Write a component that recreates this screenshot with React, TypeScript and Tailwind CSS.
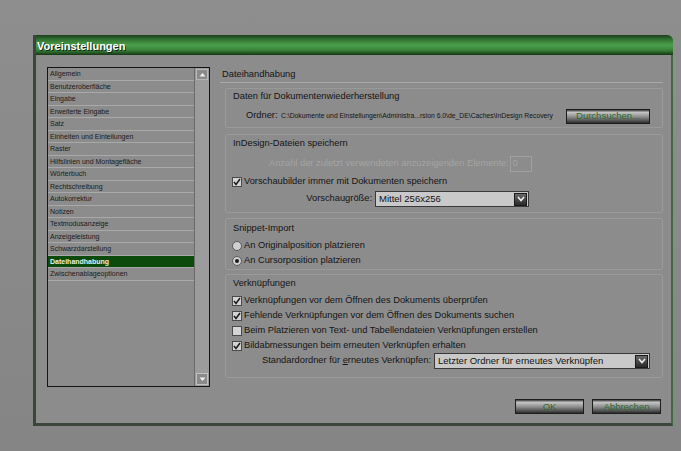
import React from 'react';

const categories = [
  'Allgemein',
  'Benutzeroberfläche',
  'Eingabe',
  'Erweiterte Eingabe',
  'Satz',
  'Einheiten und Einteilungen',
  'Raster',
  'Hilfslinien und Montagefläche',
  'Wörterbuch',
  'Rechtschreibung',
  'Autokorrektur',
  'Notizen',
  'Textmodusanzeige',
  'Anzeigeleistung',
  'Schwarzdarstellung',
  'Dateihandhabung',
  'Zwischenablageoptionen',
];

const font = { fontFamily: '"Liberation Sans", Arial, sans-serif' };

const CheckBox = ({ checked }: { checked: boolean }) => (
  <span className="w-[10px] h-[10px] mr-[2px] bg-[#d4d4d4] border border-[#4a4a4a] flex items-center justify-center shrink-0">
    {checked && (
      <svg width="8" height="8" viewBox="0 0 8 8">
        <path d="M1 4 L3 6.5 L7 1" stroke="#1a1a1a" strokeWidth="1.5" fill="none" />
      </svg>
    )}
  </span>
);

const Radio = ({ checked }: { checked: boolean }) => (
  <span className="w-[10px] h-[10px] mr-[2px] rounded-full bg-[#d0d0d0] border border-[#5a5a5a] flex items-center justify-center shrink-0">
    {checked && <span className="w-[4px] h-[4px] rounded-full bg-[#1a1a1a]" />}
  </span>
);

const SelectBox = ({ value, width }: { value: string; width: string }) => (
  <div className={`${width} h-[16px] bg-[#c9c9c9] border border-[#3a3a3a] flex items-center justify-between pl-[3px] shrink-0`}>
    <span className="text-[9.5px] text-[#111] whitespace-nowrap">{value}</span>
    <span className="w-[13px] h-[13px] mr-[1px] bg-gradient-to-b from-[#6a6a6a] to-[#2a2a2a] border border-[#1a1a1a] flex items-center justify-center">
      <svg width="8" height="6" viewBox="0 0 8 6">
        <path d="M1 1 L4 4.5 L7 1" stroke="#f0f0f0" strokeWidth="1.6" fill="none" />
      </svg>
    </span>
  </div>
);

const MetalButton = ({ label, width }: { label: string; width: string }) => (
  <button
    className={`${width} h-[15px] shrink-0 border border-[#1c1c1c] bg-[linear-gradient(to_bottom,#3a3a3a_0%,#c4c4c4_18%,#8a8a8a_55%,#2e2e2e_100%)] text-[9.5px] text-[#2f6a2f] leading-none flex items-center justify-center`}
  >
    {label}
  </button>
);

export default function App() {
  return (
    <div
      className="w-[681px] h-[451px] bg-[linear-gradient(to_bottom,#8e8e8e,#858585)] pt-[35px] pl-[33px] overflow-hidden"
      style={font}
    >
      <div className="w-[640px] h-[391px] flex flex-col bg-[#8c8c8c] border-l-[3px] border-l-[#3a463a] border-r-[2px] border-r-[#3f6b3f] border-b-[3px] border-b-[#3b453b] rounded-tr-[6px]">
        {/* title bar */}
        <div className="h-[20px] -mr-[2px] rounded-tr-[6px] bg-[linear-gradient(to_bottom,#1b3c1b_0%,#2f6e2f_20%,#4c9f4c_50%,#3b843b_75%,#163616_100%)] flex items-center pl-[1px] pt-[2px]">
          <span className="text-white font-bold text-[11px] [text-shadow:1px_1px_0_#122812]">Voreinstellungen</span>
        </div>

        <div className="flex flex-col pl-[11px] pt-[12px]">
          <div className="flex h-[320px]">
            {/* category list */}
            <div className="w-[163px] h-[320px] border border-[#141414] flex">
              <div className="flex-1 flex flex-col">
                {categories.map((c) => (
                  <div
                    key={c}
                    className={`h-[12.5px] flex items-center pl-[2px] text-[7px] leading-none border-b border-[#a9a9a9] whitespace-nowrap ${
                      c === 'Dateihandhabung' ? 'bg-[#0c4a0c] text-[#e8f4e8] font-bold' : 'text-[#1a1a1a]'
                    }`}
                  >
                    {c}
                  </div>
                ))}
              </div>
              <div className="w-[15px] bg-[#9c9c9c] border-l border-[#6a6a6a] flex flex-col justify-between py-[1px] items-center">
                <div className="w-[12px] h-[11px] bg-[#8a8a8a] border border-[#b8b8b8] flex items-center justify-center">
                  <svg width="7" height="5" viewBox="0 0 7 5">
                    <path d="M0.5 4.5 L3.5 1 L6.5 4.5 Z" fill="#eeeeee" />
                  </svg>
                </div>
                <div className="w-[12px] h-[12px] bg-[#8a8a8a] border border-[#c0c0c0] flex items-center justify-center">
                  <svg width="7" height="5" viewBox="0 0 7 5">
                    <path d="M0.5 0.5 L3.5 4 L6.5 0.5 Z" fill="#eeeeee" />
                  </svg>
                </div>
              </div>
            </div>

            {/* right panel */}
            <div className="w-[443px] ml-[10px] mt-[1px] text-[9.3px] text-[#141414] whitespace-nowrap">
              <div className="h-[15px] flex items-center pl-[2px] border-b border-[#a8a8a8]">Dateihandhabung</div>

              {/* Daten für Dokumentenwiederherstellung */}
              <div className="ml-[5px] mt-[5px] border border-[#999999] rounded-[2px] pt-[1px] pb-[4px]">
                <div className="h-[14px] flex items-center pl-[7px]">Daten für Dokumentenwiederherstellung</div>
                <div className="h-[14px] mt-[5px] flex items-center pl-[20px]">
                  <span className="w-[35px]">Ordner:</span>
                  <span className="text-[6.8px] flex-1 overflow-hidden">
                    C:\Dokumente und Einstellungen\Administra...rsion 6.0\de_DE\Caches\InDesign Recovery
                  </span>
                  <MetalButton label="Durchsuchen..." width="w-[84px]" />
                  <span className="w-[12px]" />
                </div>
              </div>

              {/* InDesign-Dateien speichern */}
              <div className="ml-[5px] mt-[6px] border border-[#999999] rounded-[2px] pt-[2px] pb-[5px]">
                <div className="h-[14px] flex items-center pl-[7px]">InDesign-Dateien speichern</div>
                <div className="h-[16px] mt-[5px] flex items-center pl-[43px] text-[#a5a5a5]">
                  <span>Anzahl der zuletzt verwendeten anzuzeigenden Elemente:</span>
                  <span className="ml-[1px] w-[22px] h-[16px] border border-[#a0a0a0] text-[9px] pl-[2px] flex items-center">0</span>
                </div>
                <div className="h-[14px] mt-[3px] flex items-center pl-[6px]">
                  <CheckBox checked />
                  <span>Vorschaubilder immer mit Dokumenten speichern</span>
                </div>
                <div className="h-[16px] mt-[2px] flex items-center">
                  <span className="w-[149px] text-right pr-[3px]">Vorschaugröße:</span>
                  <SelectBox value="Mittel 256x256" width="w-[154px]" />
                </div>
              </div>

              {/* Snippet-Import */}
              <div className="ml-[5px] mt-[5px] border border-[#999999] rounded-[2px] pt-[3px] pb-[1px]">
                <div className="h-[14px] flex items-center pl-[7px]">Snippet-Import</div>
                <div className="h-[14px] mt-[3px] flex items-center pl-[6px]">
                  <Radio checked={false} />
                  <span>An Originalposition platzieren</span>
                </div>
                <div className="h-[14px] mt-[1px] flex items-center pl-[6px]">
                  <Radio checked />
                  <span>An Cursorposition platzieren</span>
                </div>
              </div>

              {/* Verknüpfungen */}
              <div className="ml-[5px] mt-[4px] border border-[#999999] rounded-[2px] pt-[2px] pb-[8px]">
                <div className="h-[14px] flex items-center pl-[7px]">Verknüpfungen</div>
                <div className="h-[15px] mt-[2px] flex items-center pl-[6px]">
                  <CheckBox checked />
                  <span>Verknüpfungen vor dem Öffnen des Dokuments überprüfen</span>
                </div>
                <div className="h-[15px] flex items-center pl-[6px]">
                  <CheckBox checked />
                  <span>Fehlende Verknüpfungen vor dem Öffnen des Dokuments suchen</span>
                </div>
                <div className="h-[15px] flex items-center pl-[6px]">
                  <CheckBox checked={false} />
                  <span>Beim Platzieren von Text- und Tabellendateien Verknüpfungen erstellen</span>
                </div>
                <div className="h-[15px] flex items-center pl-[6px]">
                  <CheckBox checked />
                  <span>Bildabmessungen beim erneuten Verknüpfen erhalten</span>
                </div>
                <div className="h-[16px] flex items-center pl-[36px]">
                  <span className="w-[172px] text-right pr-[3px]">
                    Standardordner für <span className="underline">e</span>rneutes Verknüpfen:
                  </span>
                  <SelectBox value="Letzter Ordner für erneutes Verknüpfen" width="w-[216px]" />
                </div>
              </div>
            </div>
          </div>

          {/* buttons */}
          <div className="flex justify-end gap-[8px] mt-[12px] pr-[10px]">
            <MetalButton label="OK" width="w-[69px]" />
            <MetalButton label="Abbrechen" width="w-[69px]" />
          </div>
        </div>
      </div>
    </div>
  );
}
